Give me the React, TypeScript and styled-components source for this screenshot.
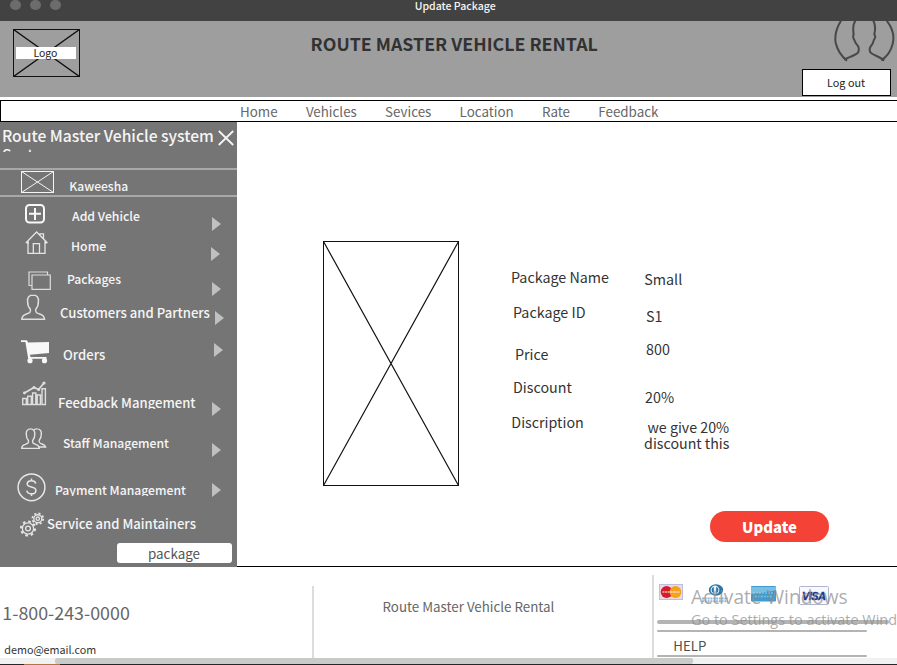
import React from "react";
import styled, { createGlobalStyle } from "styled-components";

const GlobalStyle = createGlobalStyle`
  * { box-sizing: border-box; }
  body { margin: 0; overflow: hidden; background: #fff; }
  svg { display: block; flex: none; }
`;

const Page = styled.div`
  display: flex;
  flex-direction: column;
  width: 897px;
  height: 665px;
  overflow: hidden;
  background: #fff;
  font-family: "Noto Sans CJK SC", "Noto Sans", sans-serif;
  white-space: nowrap;
`;

/* ---------- window bar ---------- */
const TitleBar = styled.div`
  display: flex;
  height: 21px;
  flex: none;
  background: #424242;
`;
const WindowDots = styled.div`
  display: flex;
  gap: 10px;
  width: 414.7px;
  padding-left: 10px;
`;
const Dot = styled.i`
  width: 10.5px;
  height: 10px;
  margin-right: -0.5px;
  border-radius: 50%;
  background: #6c6c6c;
`;
const WindowTitle = styled.div`
  font-size: 10.54px;
  font-weight: 500;
  line-height: 12px;
  color: #f5f5f5;
`;

/* ---------- header ---------- */
const Header = styled.header`
  display: flex;
  height: 76px;
  flex: none;
  background: #9e9e9e;
`;
const Logo = styled.div`
  display: grid;
  width: 67px;
  height: 48px;
  margin: 8px 0 0 13px;
  > * { grid-area: 1 / 1; }
`;
const LogoText = styled.span`
  width: 60px;
  height: 12px;
  margin: 18px 0 0 3px;
  padding-left: 17.4px;
  background: #fff;
  color: #222;
  font-size: 10.48px;
  line-height: 12px;
`;
const SiteTitle = styled.h1`
  width: 490px;
  margin: 12px 0 0 230.6px;
  font-size: 17.8px;
  font-weight: 700;
  line-height: 20px;
  color: #323232;
`;
const Account = styled.div`
  display: flex;
  flex-direction: column;
`;
const LogoutButton = styled.button`
  width: 89px;
  height: 27px;
  margin-top: 7px;
  margin-left: 1px;
  padding: 0;
  border: 1px solid #000;
  background: #fff;
  color: #222;
  font: 10.81px/23px "Noto Sans CJK SC", sans-serif;
  padding-bottom: 1px;
`;
const AvatarSlot = styled.div`
  height: 41px;
  margin-left: 32.3px;
`;

/* ---------- navigation ---------- */
const Nav = styled.nav`
  display: flex;
  gap: 28.3px;
  flex: none;
  width: 900px;
  height: 22px;
  margin-top: 3px;
  padding-left: 239px;
  border: 1px solid #000;
`;
const NavLink = styled.a`
  font-size: 13.37px;
  line-height: 21px;
  color: #666;
`;

/* ---------- sidebar ---------- */
const Main = styled.div`
  display: flex;
  height: 445px;
  flex: none;
`;
const Sidebar = styled.aside`
  width: 237px;
  flex: none;
  background: #757575;
  color: #f5f5f5;
  font-weight: 500;
`;
const SidebarHead = styled.div`
  display: flex;
  gap: 2.5px;
  height: 46px;
  padding: 4px 0 0 2px;
`;
const SidebarTitle = styled.div`
  width: 213px;
  height: 25.5px;
  overflow: hidden;
  font-size: 15.68px;
  line-height: 19px;
  white-space: normal;
`;
const CloseSlot = styled.div`padding-top: 4px;`;
const Profile = styled.div`
  display: flex;
  gap: 15.7px;
  height: 29px;
  padding: 1px 0 0 20.5px;
  border: solid #a8a8a8;
  border-width: 2px 0;
`;
const ProfileName = styled.span`
  padding-top: 5px;
  font-size: 12.12px;
  line-height: 20px;
`;
const MenuRow = styled.div<{ $h: number }>`
  display: flex;
  height: ${(p) => p.$h}px;
`;
const IconCell = styled.div<{ $x: number; $y: number; $w: number }>`
  width: ${(p) => p.$w}px;
  flex: none;
  padding: ${(p) => p.$y}px 0 0 ${(p) => p.$x}px;
`;
const MenuLabel = styled.span<{ $y: number; $size: number; $w: number; $clip?: number }>`
  width: ${(p) => p.$w}px;
  height: ${(p) => p.$clip ?? 20}px;
  flex: none;
  margin-top: ${(p) => p.$y}px;
  overflow: hidden;
  font-size: ${(p) => p.$size}px;
  line-height: 20px;
`;
const Arrow = styled.i<{ $y: number }>`
  width: 0;
  height: 14px;
  margin-top: ${(p) => p.$y}px;
  border: solid transparent;
  border-width: 7px 0 7px 9px;
  border-left-color: #c0c0c0;
`;
const PackageButton = styled.button`
  display: block;
  width: 115px;
  height: 20px;
  margin: 0 0 0 117px;
  padding: 0 1px 0 0;
  border: 0;
  border-radius: 3px;
  background: #fff;
  color: #555;
  font: 13.39px/20px "Noto Sans CJK SC", sans-serif;
`;

/* ---------- package details ---------- */
const Content = styled.main`
  display: flex;
  flex: 1;
  border-bottom: 1px solid #000;
`;
const PhotoSlot = styled.div`
  width: 274px;
  padding: 119px 0 0 86px;
`;
const Details = styled.section`
  display: flex;
  flex-direction: column;
`;
const Fields = styled.dl`
  display: flex;
  height: 389px;
  margin: 0;
  font-size: 14.3px;
  line-height: 20px;
  color: #333;
`;
const FieldColumn = styled.div<{ $w: number; $top: number }>`
  display: flex;
  flex-direction: column;
  width: ${(p) => p.$w}px;
  padding-top: ${(p) => p.$top}px;
`;
const FieldName = styled.dt<{ $h: number; $x: number }>`
  height: ${(p) => p.$h}px;
  padding-left: ${(p) => p.$x}px;
`;
const FieldValue = styled.dd<{ $h: number; $x: number }>`
  height: ${(p) => p.$h}px;
  margin: 0;
  padding-left: ${(p) => p.$x}px;
`;
const Description = styled.dd`
  margin: 0;
  font-size: 14.23px;
  line-height: 16px;
  text-indent: 3.4px;
`;
const UpdateButton = styled.button`
  width: 119px;
  height: 31px;
  margin-left: 199px;
  padding: 0;
  border: 0;
  border-radius: 16px;
  background: #f44336;
  color: #fff;
  font: 900 14.9px/31px "Noto Sans CJK SC", sans-serif;
`;

/* ---------- footer ---------- */
const Footer = styled.footer`
  display: flex;
  height: 91px;
  flex: none;
`;
const Contact = styled.div`
  display: flex;
  flex-direction: column;
  width: 312px;
  padding: 35px 0 0 2.3px;
`;
const Phone = styled.span`
  height: 39px;
  font-size: 17.85px;
  line-height: 20px;
  color: #666;
`;
const Email = styled.span`
  padding-left: 2px;
  font-size: 10.78px;
  line-height: 18px;
  color: #333;
`;
const FooterName = styled.div`
  width: 340px;
  margin-top: 19px;
  padding: 9px 0 0 68.5px;
  border-left: 2px solid #dcdcdc;
  color: #666;
  font-size: 13.35px;
  line-height: 24px;
`;
const Payments = styled.div`
  position: relative;
  flex: 1;
  margin-top: 8px;
  padding: 9px 0 0 3px;
  border-left: 2px solid #dcdcdc;
`;
const Cards = styled.div`
  display: flex;
  align-items: flex-start;
  height: 36px;
  padding-left: 2px;
`;
const Rule = styled.div<{ $w: number; $h: number; $gap: number }>`
  width: ${(p) => p.$w}px;
  height: ${(p) => p.$h}px;
  margin-bottom: ${(p) => p.$gap}px;
  border-radius: 2px;
  background: #b4b4b4;
`;
const Help = styled.div`
  height: 23px;
  padding-left: 16.3px;
  font-size: 13.24px;
  line-height: 27px;
  color: #505050;
`;
const Watermark = styled.div`
  position: absolute;
  top: 8px;
  left: 37px;
  display: flex;
  flex-direction: column;
  color: rgba(140, 140, 140, 0.72);
  font-family: "Open Sans", sans-serif;
`;
const WatermarkTitle = styled.span`
  font-size: 19.1px;
  line-height: 28px;
`;
const WatermarkText = styled.span`
  font-size: 14.44px;
  line-height: 17px;
`;
const ScrollTrack = styled.div`
  height: 6px;
  flex: none;
  padding-left: 55px;
  background: #f1f1f1;
`;
const ScrollThumb = styled.div`
  width: 638px;
  height: 6px;
  border-radius: 2px;
  background: #c9cbc9;
`;
const Taskbar = styled.div`
  height: 1px;
  flex: none;
  padding-left: 24px;
  background: #25282a;
`;
const TaskbarItem = styled.div`
  width: 36px;
  height: 1px;
  background: #b27640;
`;

/* ---------- drawings ---------- */
const Crossed = ({ w, h, color, sw = 1 }: { w: number; h: number; color: string; sw?: number }) => (
  <svg width={w} height={h} fill="none" stroke={color}>
    <rect x=".5" y=".5" width={w - 1} height={h - 1} strokeWidth="1" />
    <path d={`M.5 .5L${w - 0.5} ${h - 0.5}M${w - 0.5} .5L.5 ${h - 0.5}`} strokeWidth={sw} />
  </svg>
);

const AvatarIcon = () => (
  <svg width="63.3" height="41" viewBox="160 63 190 123" fill="none" stroke="#484848" strokeWidth="6">
    <path d="M184 62C168 88 164 105 168 128C173 151 185 168 202 182M193 179C205 172 224 168 234 159C238 154 238 146 236 140C230 133 225 126 223 118C220 114 220 106 222 103C220 90 219 74 227 62M281 62C288 74 287 90 284 103C288 109 287 115 283 119C281 130 276 137 271 143C269 150 270 155 274 159C284 166 299 170 314 181M321 62C339 84 345 108 339 132C334 153 323 169 305 181" />
  </svg>
);

const CloseIcon = () => (
  <svg width="16" height="16" stroke="#f5f5f5" strokeWidth="1.8">
    <path d="M.8 1L15.2 15M15.2 1L.8 15" />
  </svg>
);

const AddIcon = () => (
  <svg width="20" height="20" fill="none" stroke="#f8f8f8" strokeWidth="2">
    <rect x="1" y="1" width="18" height="17.5" rx="3.5" />
    <path d="M10 4v12M4 9.8h12" />
  </svg>
);
const HomeIcon = () => (
  <svg width="24" height="24" fill="none" stroke="#e4e4e4" strokeWidth="1.3">
    <path d="M.8 12L11.6 1L22.5 12M3 10v12.3h17V10M8.3 22V12.6h6.2V22M15 4V2.8h3.5v5M2 12h2M19.5 12h2" />
  </svg>
);
const PackagesIcon = () => (
  <svg width="24" height="20" fill="none" stroke="#dcdcdc" strokeWidth="1.2">
    <path d="M3.6 14.5H1V1h18.5v3M4 4h18.3v14.3H4z" />
  </svg>
);
const PersonIcon = () => (
  <svg width="25" height="27" fill="none" stroke="#dedede" strokeWidth="1.5">
    <path d="M12 1C8.2 1 6.2 3.5 6.6 7.5C6.6 11 7.7 13.5 9.3 15C10 18.5 8.5 19 5.5 20C2.5 21 1 22 .8 25.3H23.5C23.3 22 21.8 21 18.7 20C15.6 19 14.2 18.5 14.8 15C16.4 13.5 17.4 11 17.4 7.5C17.8 3.5 15.8 1 12 1Z" />
  </svg>
);
const CartIcon = () => (
  <svg width="28" height="24" fill="#f8f8f8">
    <path d="M0 .3h6l1 2.2L28 2v11L9 14.8l.5 2.2h16v1.8H7.2L4.4 2H0z" />
    <circle cx="9" cy="20.7" r="2.6" />
    <circle cx="23.5" cy="20.7" r="2.6" />
  </svg>
);
const ChartIcon = () => (
  <svg width="25" height="25" fill="none" stroke="#dedede" strokeWidth="1.4">
    <path d="M.7 17.5h3.6v6H.7zM5.7 15.2h3.6v8.3H5.7zM10.6 12h3.2v11.5h-3.2zM15.2 14h3.2v9.5h-3.2zM20 7.7h3.4v15.8H20z" />
    <path d="M2.4 12L12 6.5l4.6 2L22 2" strokeWidth="1.7" />
    <g fill="#dedede" stroke="none">
      <circle cx="2.4" cy="12" r="1.4" />
      <circle cx="12" cy="6.5" r="1.5" />
      <circle cx="16.6" cy="8.5" r="1.5" />
      <circle cx="22" cy="2" r="1.6" />
    </g>
  </svg>
);
const StaffIcon = () => (
  <svg width="26" height="22" fill="none" stroke="#e4e4e4" strokeWidth="1.4">
    <path d="M9.5 .9C6.6 .9 5 3 5.3 6.2C5.3 9 6 11 7.3 12.2C8 15.2 6.5 15.6 4.2 16.4C2 17.1 .8 18 .7 20.4H18.3C18.2 18 17 17.1 14.8 16.4C12.5 15.6 11 15.2 11.8 12.2C13 11 13.8 9 13.8 6.2C14 3 12.4 .9 9.5 .9Z" />
    <path d="M12.8 2.2C14 .5 15.4 .8 16.4 .9C19 1 20.6 3 20.3 6.2C20.3 9 19.4 11 18.2 12.2C17.8 15 19 15.4 21 16C23.8 17 24.3 17.8 24.6 19H18" />
  </svg>
);
const DollarIcon = () => (
  <svg width="29" height="29" fill="none" stroke="#e8e8e8" strokeWidth="1.5">
    <circle cx="14.5" cy="14.3" r="13.4" />
    <path d="M18.8 10.5C18.3 8.6 16.6 7.7 14.4 7.7C11.8 7.7 10.2 9 10.2 11C10.2 15.4 18.9 12.4 18.9 17.4C18.9 19.6 17.1 20.8 14.5 20.8C11.9 20.8 10.2 19.7 9.8 17.6M14.5 5.5v2.2M14.5 20.8V23" />
  </svg>
);
const GearsIcon = () => (
  <svg width="25" height="25" fill="none" stroke="#e4e4e4">
    <circle cx="8" cy="16.5" r="5.6" strokeWidth="1.3" />
    <circle cx="8" cy="16.5" r="7" strokeWidth="2.2" strokeDasharray="2.6 2.9" />
    <circle cx="8" cy="16.5" r="2.4" strokeWidth="1.3" />
    <circle cx="17.8" cy="6.7" r="4" strokeWidth="1.4" />
    <circle cx="17.8" cy="6.7" r="5.4" strokeWidth="1.8" strokeDasharray="2.1 2.14" />
    <circle cx="17.8" cy="6.7" r="1.7" strokeWidth="1.3" />
  </svg>
);

const CardIcons = () => (
  <svg width="172" height="22">
    <rect x=".5" y=".5" width="23" height="15" fill="#e8dce0" stroke="#b9bfdc" />
    <circle cx="7.6" cy="8" r="5.9" fill="#d51c2c" />
    <circle cx="16.5" cy="8" r="5.9" fill="#f6a21c" />
    <path d="M3.5 8h17" stroke="#fff" strokeOpacity=".7" strokeWidth="1.3" strokeDasharray="2 .6" />
    <ellipse cx="57" cy="6" rx="7.2" ry="5.7" fill="#2a74a8" />
    <circle cx="56" cy="6" r="4.4" fill="#e9f2f8" />
    <path d="M54.8 2.8a3.4 3.4 0 0 0 0 6.4zM57.2 2.8a3.4 3.4 0 0 1 0 6.4z" fill="#2a74a8" />
    <path d="M43 14.5h26M43 17.3h26" stroke="#8db8dc" strokeWidth="2" strokeDasharray="2 .8" />
    <rect x="92" y="2" width="25" height="15.5" rx="1" fill="#3f9ccf" />
    <path d="M92 3h25v3.5L92 10z" fill="#78bfe3" />
    <path d="M94 9h21M96 12.5h17" stroke="#a7d5ec" strokeOpacity=".6" strokeWidth="1.5" strokeDasharray="2 1" />
    <rect x="140.5" y="2.5" width="29" height="18" rx="1" fill="#f8f9fc" stroke="#aeb6cc" />
    <text x="143" y="15.8" fontFamily="Liberation Sans, sans-serif" fontSize="11" fontWeight="700" fontStyle="italic" fill="#1c3390" stroke="#1c3390" strokeWidth=".4" textLength="24">VISA</text>
  </svg>
);

type Item = {
  label: string; h: number; size: number; x: number; y: number; clip?: number;
  icon: React.ReactNode; ix: number; iy: number; arrow?: [number, number];
};

const ITEMS: Item[] = [
  { label: "Add Vehicle", h: 31, size: 12.28, x: 72, y: 9, icon: <AddIcon />, ix: 25, iy: 7, arrow: [212, 20] },
  { label: "Home", h: 34, size: 12.28, x: 71, y: 8, icon: <HomeIcon />, ix: 24.5, iy: 3, arrow: [211, 19] },
  { label: "Packages", h: 31, size: 12.16, x: 67, y: 7, icon: <PackagesIcon />, ix: 27.5, iy: 9, arrow: [212, 20] },
  { label: "Customers and Partners", h: 37, size: 13.12, x: 60, y: 10, icon: <PersonIcon />, ix: 21, iy: 1, arrow: [215, 18] },
  { label: "Orders", h: 45, size: 13.05, x: 63, y: 15, icon: <CartIcon />, ix: 21, iy: 10, arrow: [214, 13] },
  { label: "Feedback Mangement", h: 48, size: 13.1, x: 58, y: 18, clip: 16, icon: <ChartIcon />, ix: 22, iy: 6, arrow: [212, 27] },
  { label: "Staff Management", h: 42, size: 12.2, x: 63, y: 10, clip: 17, icon: <StaffIcon />, ix: 21, iy: 5, arrow: [212, 20] },
  { label: "Payment Management", h: 43, size: 12.2, x: 55, y: 15, clip: 16, icon: <DollarIcon />, ix: 17.2, iy: 8, arrow: [212, 18] },
  { label: "Service and Maintainers", h: 35, size: 13.07, x: 47, y: 6, icon: <GearsIcon />, ix: 19.5, iy: 4 },
];

export default function App() {
  return (
    <Page>
      <GlobalStyle />
      <TitleBar>
        <WindowDots><Dot /><Dot /><Dot /></WindowDots>
        <WindowTitle>Update Package</WindowTitle>
      </TitleBar>
      <Header>
        <Logo>
          <Crossed w={67} h={48} color="#111" sw={1.4} />
          <LogoText>Logo</LogoText>
        </Logo>
        <SiteTitle>ROUTE MASTER VEHICLE RENTAL</SiteTitle>
        <Account>
          <AvatarSlot><AvatarIcon /></AvatarSlot>
          <LogoutButton>Log out</LogoutButton>
        </Account>
      </Header>
      <Nav>
        {["Home", "Vehicles", "Sevices", "Location", "Rate", "Feedback"].map((t) => (
          <NavLink key={t}>{t}</NavLink>
        ))}
      </Nav>
      <Main>
        <Sidebar>
          <SidebarHead>
            <SidebarTitle>Route Master Vehicle system System</SidebarTitle>
            <CloseSlot><CloseIcon /></CloseSlot>
          </SidebarHead>
          <Profile>
            <Crossed w={33} h={22} color="#f5f5f5" />
            <ProfileName>Kaweesha</ProfileName>
          </Profile>
          {ITEMS.map((it) => (
            <MenuRow key={it.label} $h={it.h}>
              <IconCell $x={it.ix} $y={it.iy} $w={it.x}>{it.icon}</IconCell>
              <MenuLabel $y={it.y} $size={it.size} $clip={it.clip} $w={(it.arrow ? it.arrow[0] : 220) - it.x}>
                {it.label}
              </MenuLabel>
              {it.arrow && <Arrow $y={it.arrow[1]} />}
            </MenuRow>
          ))}
          <PackageButton>package</PackageButton>
        </Sidebar>
        <Content>
          <PhotoSlot><Crossed w={136} h={245} color="#111" sw={1.2} /></PhotoSlot>
          <Details>
            <Fields>
              <FieldColumn $w={133.1} $top={145}>
                <FieldName $h={35} $x={0}>Package Name</FieldName>
                <FieldName $h={42} $x={2}>Package ID</FieldName>
                <FieldName $h={33} $x={4}>Price</FieldName>
                <FieldName $h={35} $x={2}>Discount</FieldName>
                <FieldName $h={20} $x={0.3}>Discription</FieldName>
              </FieldColumn>
              <FieldColumn $w={120} $top={147}>
                <FieldValue $h={37} $x={0.2}>Small</FieldValue>
                <FieldValue $h={33} $x={2}>S1</FieldValue>
                <FieldValue $h={48} $x={2}>800</FieldValue>
                <FieldValue $h={32} $x={1}>20%</FieldValue>
                <Description>we give 20%<br />discount this</Description>
              </FieldColumn>
            </Fields>
            <UpdateButton>Update</UpdateButton>
          </Details>
        </Content>
      </Main>
      <Footer>
        <Contact>
          <Phone>1-800-243-0000</Phone>
          <Email>demo@email.com</Email>
        </Contact>
        <FooterName>Route Master Vehicle Rental</FooterName>
        <Payments>
          <Cards><CardIcons /></Cards>
          <Rule $w={232} $h={4} $gap={6} />
          <Rule $w={210} $h={2} $gap={0} />
          <Help>HELP</Help>
          <Rule $w={210} $h={2} $gap={0} />
          <Watermark>
            <WatermarkTitle>Activate Windows</WatermarkTitle>
            <WatermarkText>Go to Settings to activate Wind</WatermarkText>
          </Watermark>
        </Payments>
      </Footer>
      <ScrollTrack><ScrollThumb /></ScrollTrack>
      <Taskbar><TaskbarItem /></Taskbar>
    </Page>
  );
}
